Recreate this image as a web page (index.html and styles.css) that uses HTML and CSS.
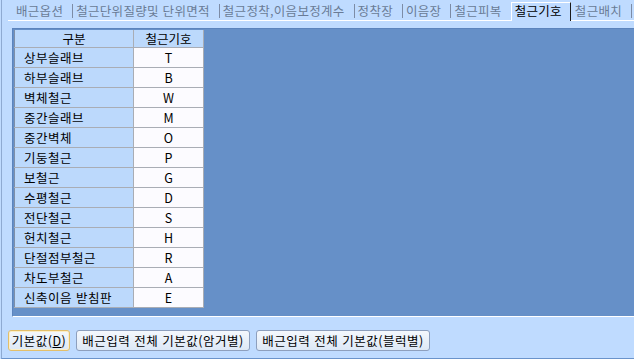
FILE: index.html
```html
<!DOCTYPE html>
<html lang="ko">
<head>
    <meta charset="UTF-8">
    <title>철근기호</title>
    <link rel="stylesheet" href="styles.css">
</head>
<body>

    <div class="window">
        <div class="tabs">
            <span class="tab first">배근옵션</span>
            <span class="tab">철근단위질량및 단위면적</span>
            <span class="tab">철근정착,이음보정계수</span>
            <span class="tab">정착장</span>
            <span class="tab">이음장</span>
            <span class="tab">철근피복</span>
            <span class="tab active">철근기호</span>
            <span class="tab after-active">철근배치</span>
            <span class="tab"></span>
        </div>

        <div class="grid-area">
            <table class="grid">
                <colgroup>
                    <col class="col-name">
                    <col class="col-code">
                </colgroup>
                <tr class="head">
                    <th>구분</th>
                    <th>철근기호</th>
                </tr>
                <tr><td class="name">상부슬래브</td><td class="code">T</td></tr>
                <tr><td class="name">하부슬래브</td><td class="code">B</td></tr>
                <tr><td class="name">벽체철근</td><td class="code">W</td></tr>
                <tr><td class="name">중간슬래브</td><td class="code">M</td></tr>
                <tr><td class="name">중간벽체</td><td class="code">O</td></tr>
                <tr><td class="name">기둥철근</td><td class="code">P</td></tr>
                <tr><td class="name">보철근</td><td class="code">G</td></tr>
                <tr><td class="name">수평철근</td><td class="code">D</td></tr>
                <tr><td class="name">전단철근</td><td class="code">S</td></tr>
                <tr><td class="name">헌치철근</td><td class="code">H</td></tr>
                <tr><td class="name">단절점부철근</td><td class="code">R</td></tr>
                <tr><td class="name">차도부철근</td><td class="code">A</td></tr>
                <tr><td class="name">신축이음 받침판</td><td class="code">E</td></tr>
            </table>
        </div>

        <div class="buttons">
            <button class="btn focused">기본값(<u>D</u>)</button>
            <button class="btn wide">배근입력 전체 기본값(암거별)</button>
            <button class="btn wide">배근입력 전체 기본값(블럭별)</button>
        </div>
    </div>

</body>
</html>
```

FILE: styles.css
```css
body {
    margin: 0;
    padding: 0;
    width: 634px;
    height: 359px;
    overflow: hidden;
    background-color: #bfdbff;
    font-family: "Noto Sans CJK KR", "Noto Sans", sans-serif;
    font-size: 12.5px;
    color: #000;
}

.window {
    margin-left: 1px;
    height: 358px;
    border-left: 1px solid #8eaad2;
    border-bottom: 1px solid #6a93cb;
}

/* tab strip */
.tabs {
    display: flex;
    align-items: flex-start;
    height: 20px;
    margin-left: 6px;
    border-bottom: 1px solid #fff;
    white-space: nowrap;
}

.tab {
    margin-top: 4px;
    height: 14px;
    line-height: 14px;
    padding: 0 9px 0 3px;
    border-left: 1px solid #7d8ca6;
    color: #6a7b96;
    letter-spacing: 0.3px;
}

.tab.first {
    border-left: none;
    padding-left: 8px;
}

.tab.active {
    margin-top: 2px;
    height: 18px;
    line-height: 16px;
    padding: 0 8px 0 3px;
    border-top: 1px solid #fff;
    border-left: 1px solid #fff;
    border-right: 1px solid #1a1a1a;
    background-color: #bfdbff;
    color: #000;
}

.tab.after-active {
    border-left: none;
    padding-left: 4px;
}

/* grid */
.grid-area {
    margin: 7px 0 0 10px;
    height: 287px;
    border-top: 1px solid #5c84bd;
    border-left: 1px solid #5c84bd;
    background-color: #6690c8;
    border-bottom: 1px solid #fff;
}

.grid {
    margin: 1px 0 0 1px;
    border-collapse: collapse;
    table-layout: fixed;
    width: 190px;
    border-left: 1px solid #7f8fa8;
}

.col-name {
    width: 119px;
}

.col-code {
    width: 70px;
}

.grid th,
.grid td {
    padding: 0;
    border-right: 1px solid #a9adb5;
    border-bottom: 1px solid #a9adb5;
    font-weight: normal;
    white-space: nowrap;
}

.grid .head th {
    height: 17px;
    line-height: 17px;
    text-align: center;
    background-color: #bcd9fc;
}

.grid td {
    height: 19px;
    line-height: 19px;
}

.grid td.name {
    padding-left: 9px;
    background-color: #bcd9fc;
    letter-spacing: 0.5px;
}

.grid td.code {
    text-align: center;
    background-color: #fcfbff;
}

/* buttons */
.buttons {
    display: flex;
    gap: 6px;
    margin: 13px 0 0 6px;
}

.btn {
    height: 21px;
    padding: 0;
    font-family: inherit;
    font-size: 12.5px;
    color: #000;
    border: 1px solid #8d9fbd;
    border-radius: 3px;
    background: linear-gradient(#f4f8fd, #dde8f6);
    letter-spacing: 0.5px;
}

.btn.focused {
    width: 62px;
    border-color: #e3bf6a;
    box-shadow: inset 0 0 0 1px #fbeec8;
}

.btn.wide {
    width: 174px;
}
```
